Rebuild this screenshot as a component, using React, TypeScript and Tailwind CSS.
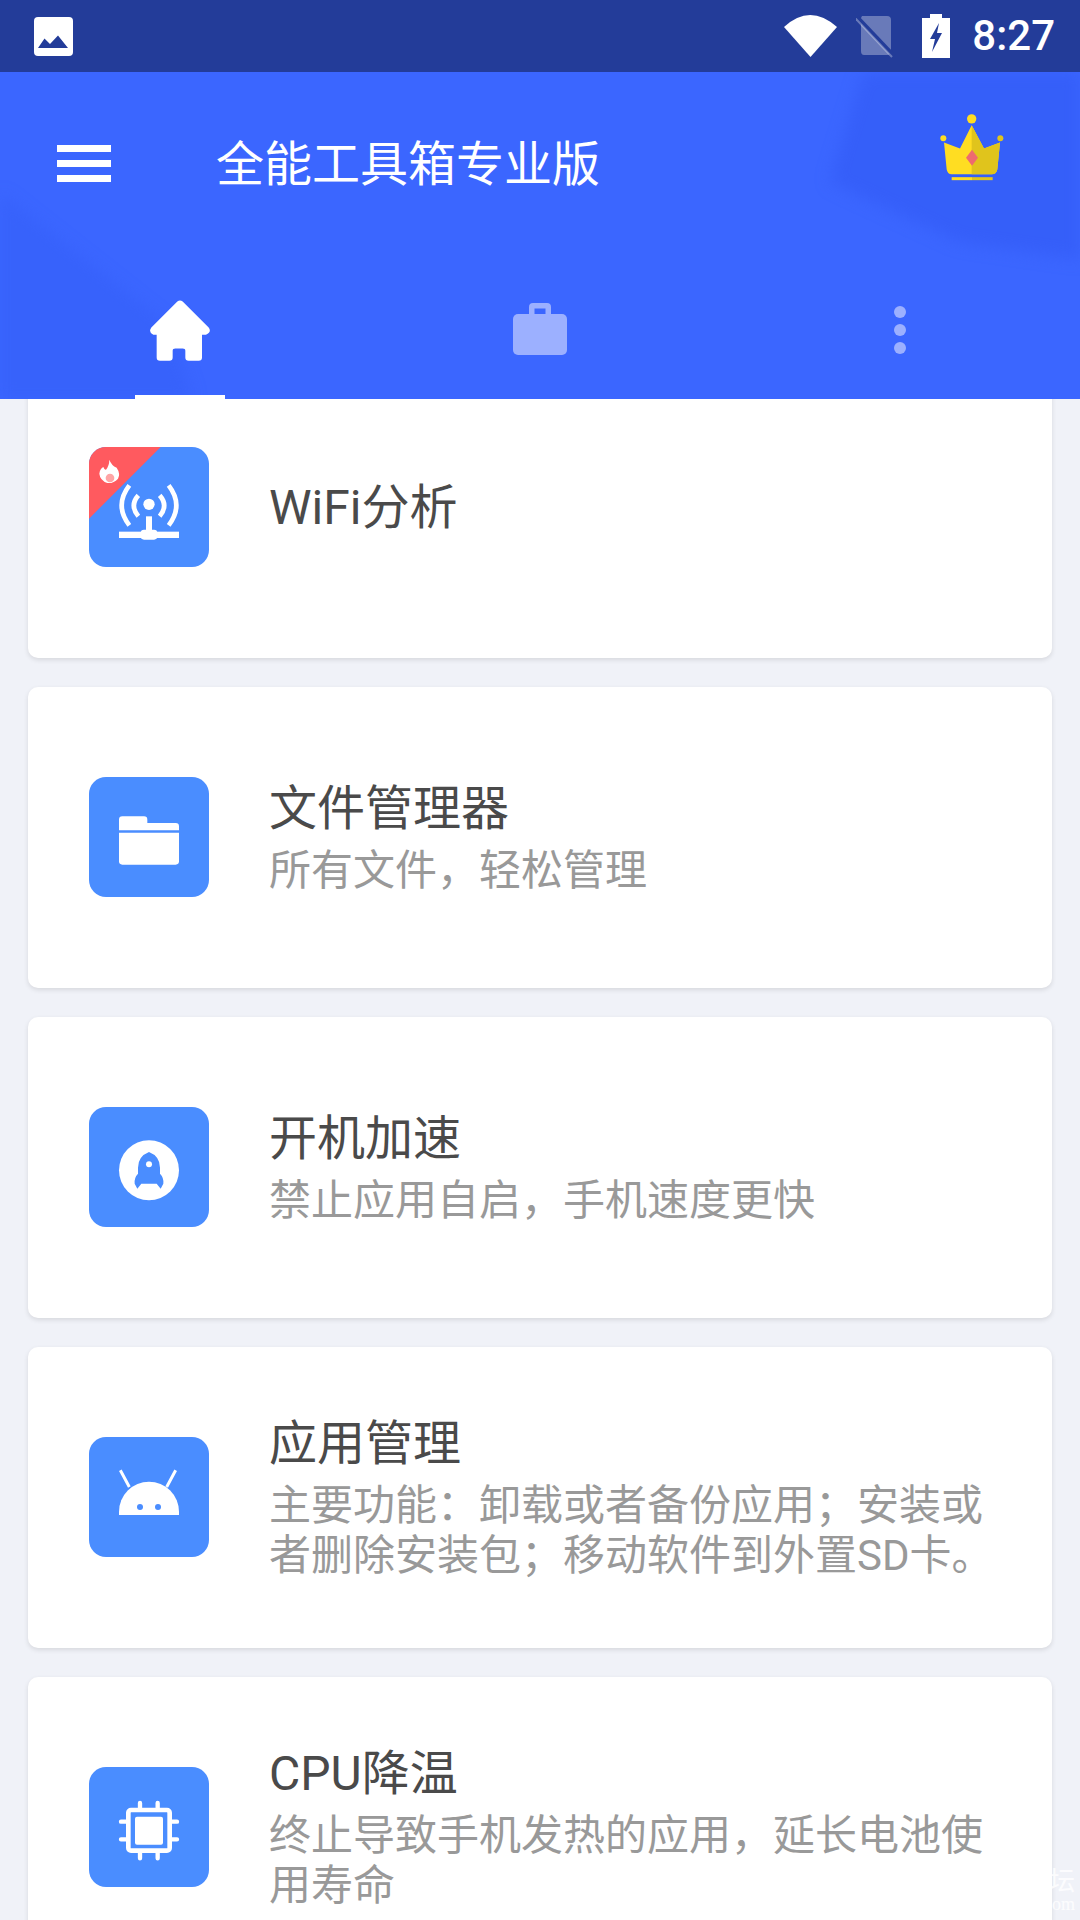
import React from "react";

const WifiIcon = () => (
  <>
    <polygon points="57,50 272,50 57,265" fill="#ff5a5f" />
    <path d="M118 88Q124 105 140 112Q152 130 144 145Q130 160 112 158Q90 150 88 130Q90 115 100 110Q104 120 108 118Q118 105 118 88Z" fill="#fff" />
    <circle cx="120" cy="143" r="13" fill="#ffa5a5" />
    <g fill="none" stroke="#fff" strokeWidth="14">
      <path d="M178 165Q132 225 178 285" />
      <path d="M205 195Q178 225 205 258" />
      <path d="M296 165Q342 225 296 285" />
      <path d="M269 195Q296 225 269 258" />
    </g>
    <g fill="#fff">
      <circle cx="237" cy="222" r="17" />
      <rect x="228" y="258" width="18" height="50" />
      <rect x="147" y="304" width="180" height="19" />
      <rect x="212" y="298" width="50" height="30" rx="10" />
    </g>
  </>
);

const FolderIcon = () => (
  <g fill="#fff">
    <path d="M147 178Q147 168 157 168L222 168Q232 168 232 178L232 188L317 188Q327 188 327 198L327 210L147 210Z" />
    <path d="M147 217L327 217L327 303Q327 313 317 313L157 313Q147 313 147 303Z" />
  </g>
);

const RocketIcon = () => (
  <>
    <circle cx="237" cy="240" r="90" fill="#fff" />
    <path d="M237 185Q270 198 270 232L270 250Q282 262 280 280L272 295L260 280L214 280L202 295L194 280Q192 262 204 250L204 232Q204 198 237 185Z" fill="#4a8dff" />
    <circle cx="237" cy="222" r="9" fill="#fff" />
  </>
);

const AndroidIcon = () => (
  <>
    <path d="M147 284L147 274A90 90 0 0 1 327 274L327 284Z" fill="#fff" />
    <circle cx="210" cy="260" r="9" fill="#4a8dff" />
    <circle cx="264" cy="260" r="9" fill="#4a8dff" />
    <path d="M151 150L178 200M317 150L290 200" stroke="#fff" strokeWidth="9" />
  </>
);

const CpuIcon = () => (
  <>
    <rect x="175" y="179" width="124" height="122" rx="8" fill="none" stroke="#fff" strokeWidth="14" />
    <rect x="195" y="199" width="84" height="84" rx="6" fill="#fff" />
    <path d="M210 158V172M263 158V172M210 308V324M263 308V324M153 214H168M153 267H168M306 214H321M306 267H321" stroke="#fff" strokeWidth="13" strokeLinecap="round" />
  </>
);

const tools = [
  { title: "WiFi分析", desc: "", icon: <WifiIcon /> },
  { title: "文件管理器", desc: "所有文件，轻松管理", icon: <FolderIcon /> },
  { title: "开机加速", desc: "禁止应用自启，手机速度更快", icon: <RocketIcon /> },
  { title: "应用管理", desc: "主要功能：卸载或者备份应用；安装或者删除安装包；移动软件到外置SD卡。", icon: <AndroidIcon /> },
  { title: "CPU降温", desc: "终止导致手机发热的应用，延长电池使用寿命", icon: <CpuIcon /> },
];

const ToolCard = ({ title, desc, icon }: { title: string; desc: string; icon: React.ReactNode }) => (
  <div className="h-[301px] shrink-0 flex items-center pl-[61px] bg-white rounded-[10px] shadow-[0_2px_5px_rgba(0,0,0,0.11)]">
    <div className="w-[120px] h-[120px] shrink-0 mb-[2px] rounded-[17px] overflow-hidden bg-[#4a8dff]">
      <svg viewBox="57 50 360 360" className="w-full h-full block">
        {icon}
      </svg>
    </div>
    <div className="ml-[60px] w-[730px]">
      <div className="text-[48px] leading-[60px] text-[#4a4a4a]">{title}</div>
      {desc && <div className="mt-[7px] text-[42px] leading-[50px] text-[#999999]">{desc}</div>}
    </div>
  </div>
);

export default function App() {
  return (
    <div className="relative w-[1080px] h-[1920px] overflow-hidden flex flex-col bg-[#f0f2f8] font-['Roboto','Noto_Sans_CJK_SC',sans-serif]">
      {/* status bar */}
      <div className="h-[72px] shrink-0 flex items-center pl-[34px] pr-[25px] bg-[#233c99] z-20">
        <svg viewBox="0 0 39 39" className="w-[39px] h-[39px]">
          <rect width="39" height="39" rx="4" fill="#fff" />
          <path d="M4 31L10.5 21.5L16 27L24 18.5L34 31Z" fill="#233c99" />
        </svg>
        <div className="flex-1" />
        <svg viewBox="0 0 53 42" className="w-[53px] h-[42px]">
          <path d="M0 12Q26 -12 53 12L26.5 42Z" fill="#fff" />
        </svg>
        <svg viewBox="0 0 40 44" className="w-[40px] h-[44px] ml-[19px]">
          <path d="M6 2H31Q35 2 35 6V37Q35 41 31 41H8Q5 41 5 37V4Z" fill="#fff" fillOpacity="0.32" />
          <path d="M1 3L38 42" stroke="#233c99" strokeWidth="4" />
          <path d="M1 3L38 42" stroke="#fff" strokeOpacity="0.32" strokeWidth="2" transform="translate(-2 1)" />
        </svg>
        <svg viewBox="0 0 28 44" className="w-[28px] h-[44px] ml-[26px]">
          <path d="M0 4H8V0H20V4H28V44H0Z" fill="#fff" />
          <path d="M17 9L8 25H13L10 38L20 19H15Z" fill="#233c99" />
        </svg>
        <span className="ml-[22px] text-[42px] leading-none font-medium text-white">8:27</span>
      </div>

      {/* header */}
      <div className="relative h-[327px] shrink-0 flex flex-col overflow-hidden bg-[#3b66ff] z-10">
        <svg viewBox="0 0 1080 327" className="absolute inset-0 w-full h-full blur-[8px]">
          <polygon points="870,-20 1100,-20 1100,190 960,170 830,110" fill="#2f58f3" fillOpacity="0.5" />
          <polygon points="-20,105 168,253 200,347 -20,347" fill="#2f58f3" fillOpacity="0.3" />
        </svg>
        <div className="relative h-[183px] flex items-center pl-[57px] pr-[76px]">
          <div className="flex flex-col gap-[8px]">
            <div className="w-[54px] h-[7px] bg-white" />
            <div className="w-[54px] h-[7px] bg-white" />
            <div className="w-[54px] h-[7px] bg-white" />
          </div>
          <div className="ml-[105px] mt-[2px] text-[48px] leading-none text-white">全能工具箱专业版</div>
          <div className="flex-1" />
          <svg viewBox="540 345 192 200" className="w-[64px] h-[67px] -mt-[32px]">
            <path d="M552 430L600 448L635 378L672 448L720 430L712 510Q710 525 695 525L575 525Q562 525 560 510Z" fill="#ffdd22" />
            <path d="M635 378L672 448L720 430L712 510Q710 525 695 525L635 525Z" fill="#e0c41c" />
            <circle cx="635" cy="359" r="14" fill="#ffdd22" />
            <circle cx="550" cy="417" r="9" fill="#ffdd22" />
            <circle cx="721" cy="417" r="9" fill="#e0c41c" />
            <rect x="575" y="534" width="61" height="9" fill="#ffdd22" />
            <rect x="636" y="534" width="62" height="9" fill="#e0c41c" />
            <path d="M636 452L654 476L636 500L618 476Z" fill="#ee6a6f" />
          </svg>
        </div>
        <div className="relative flex-1 grid grid-cols-3">
          <div className="relative flex items-start justify-center pt-[45px]">
            <svg viewBox="150 60 180 182" className="w-[60px] h-[61px]">
              <path d="M232 64Q240 58 248 64L326 142Q336 156 318 164L306 164L306 232Q306 242 296 242L266 242Q256 242 256 232L256 212Q256 205 248 205L226 205Q218 205 218 212L218 232Q218 242 208 242L180 242Q170 242 170 232L170 164L160 164Q144 156 154 142Z" fill="#fff" />
            </svg>
            <div className="absolute bottom-0 left-[135px] w-[90px] h-[4px] bg-white" />
          </div>
          <div className="flex items-start justify-center pt-[48px]">
            <svg viewBox="0 0 54 52" className="w-[54px] h-[52px]">
              <path d="M16 12V4Q16 0 20 0H34Q38 0 38 4V12H32.5V5.5H21.5V12Z" fill="#9cb0ff" />
              <rect y="11" width="54" height="41" rx="5" fill="#9cb0ff" />
            </svg>
          </div>
          <div className="flex flex-col items-center gap-[6px] pt-[51px]">
            <div className="w-[12px] h-[12px] rounded-full bg-[#9cb0ff]" />
            <div className="w-[12px] h-[12px] rounded-full bg-[#9cb0ff]" />
            <div className="w-[12px] h-[12px] rounded-full bg-[#9cb0ff]" />
          </div>
        </div>
      </div>

      {/* list, first card is scrolled under the header */}
      <div className="-mt-[42px] flex flex-col gap-[29px] px-[28px]">
        {tools.map((tool) => (
          <ToolCard key={tool.title} title={tool.title} desc={tool.desc} icon={tool.icon} />
        ))}
      </div>

      {/* watermark */}
      <div className="absolute right-[5px] bottom-[8px] flex flex-col items-end text-white/80 z-20">
        <span className="text-[26px] leading-[30px]">坛</span>
        <span className="text-[18px] leading-[16px] font-['Liberation_Serif',serif]">om</span>
      </div>
    </div>
  );
}
